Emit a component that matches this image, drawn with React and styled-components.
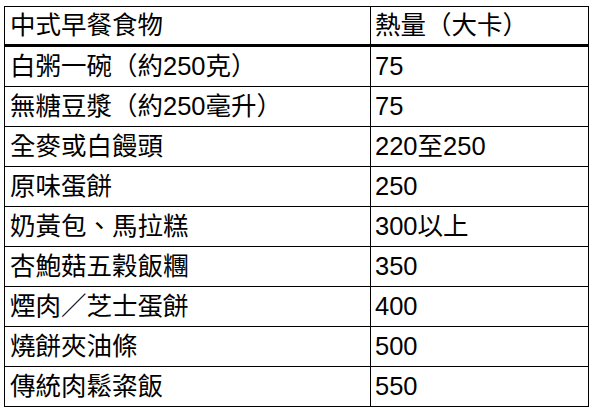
import styled, { createGlobalStyle } from "styled-components";

const GlobalStyle = createGlobalStyle`
  html, body {
    margin: 0;
    padding: 0;
    background: #fff;
  }
`;

const rows = [
  ["白粥一碗（約250克）", "75"],
  ["無糖豆漿（約250毫升）", "75"],
  ["全麥或白饅頭", "220至250"],
  ["原味蛋餅", "250"],
  ["奶黃包、馬拉糕", "300以上"],
  ["杏鮑菇五穀飯糰", "350"],
  ["煙肉／芝士蛋餅", "400"],
  ["燒餅夾油條", "500"],
  ["傳統肉鬆粢飯", "550"],
];

const Table = styled.div`
  display: grid;
  grid-template-columns: 366px 218px;
  margin: 6px 0 0 4px;
  width: max-content;
  border-top: 1px solid #000;
  border-left: 1px solid #000;
  font-family: "Liberation Sans", "Noto Sans CJK TC", sans-serif;
  font-size: 25.5px;
  color: #000;
`;

const Cell = styled.div`
  box-sizing: border-box;
  height: 40px;
  display: flex;
  align-items: center;
  padding: 1px 0 0 ${(p) => (p.$first ? 5 : 4)}px;
  border-right: 1px solid #000;
  border-bottom: ${(p) => (p.$head ? 3 : 1)}px solid #000;
  white-space: nowrap;
  line-height: 1;
`;

const App = () => {
  return (
    <>
      <GlobalStyle />
      <Table>
        <Cell $head $first>中式早餐食物</Cell>
        <Cell $head>熱量（大卡）</Cell>
        {rows.map(([food, kcal]) => (
          <>
            <Cell key={food} $first>{food}</Cell>
            <Cell key={food + "k"}>{kcal}</Cell>
          </>
        ))}
      </Table>
    </>
  );
};

export default App;
